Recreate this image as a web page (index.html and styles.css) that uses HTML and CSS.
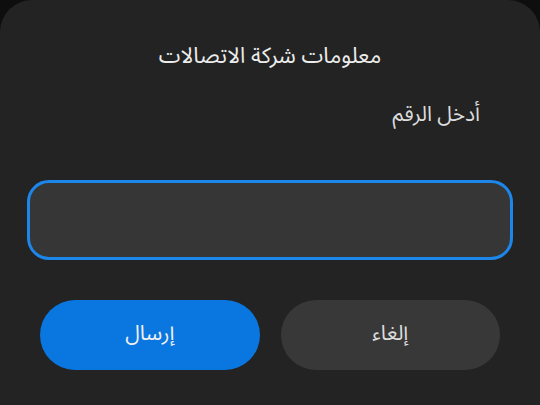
FILE: index.html
```html
<!DOCTYPE html>
<html lang="ar" dir="rtl">
<head>
<meta charset="utf-8">
<title>معلومات شركة الاتصالات</title>
<link rel="stylesheet" href="styles.css">
</head>
<body>
<div class="sheet">
  <div class="title">معلومات شركة الاتصالات</div>
  <div class="label">أدخل الرقم</div>
  <div class="field"><input class="input" type="text" aria-label="أدخل الرقم"></div>
  <div class="actions">
    <button class="btn btn-cancel">إلغاء</button>
    <button class="btn btn-send">إرسال</button>
  </div>
</div>
</body>
</html>
```
FILE: styles.css
```css
html, body {
  margin: 0;
  padding: 0;
  background: #0e0e0e;
  height: 100%;
  overflow: hidden;
}
body {
  font-family: "Noto Sans Arabic", "DejaVu Sans", "Noto Sans", sans-serif;
}
.sheet {
  background: #232323;
  border-radius: 32px 32px 0 0;
  min-height: 420px;
  box-sizing: border-box;
  padding-top: 40px;
  display: flex;
  flex-direction: column;
}
.title {
  text-align: center;
  color: #ececec;
  font-size: 22px;
  line-height: 32px;
  height: 32px;
}
.label {
  margin-top: 27px;
  padding-right: 60px;
  color: #dcdcdc;
  font-size: 21px;
  line-height: 30px;
  height: 30px;
}
.field {
  margin-top: 51px;
  padding: 0 27px;
}
.input {
  display: block;
  width: 100%;
  height: 80px;
  box-sizing: border-box;
  background: #363636;
  border: 3px solid #1d86ea;
  border-radius: 22px;
  outline: none;
  color: #eee;
  font: inherit;
  font-size: 20px;
  padding: 0 20px;
}
.actions {
  margin-top: 40px;
  display: flex;
  gap: 21px;
  padding: 0 40px;
}
.btn {
  flex: 1;
  height: 70px;
  border: none;
  border-radius: 35px;
  font-family: inherit;
  font-size: 21px;
  line-height: 1;
  color: #f0f0f0;
  padding: 0 0 3px;
}
.btn-cancel {
  background: #383838;
  color: #dcdcdc;
}
.btn-send {
  background: #0a77e0;
}
```
